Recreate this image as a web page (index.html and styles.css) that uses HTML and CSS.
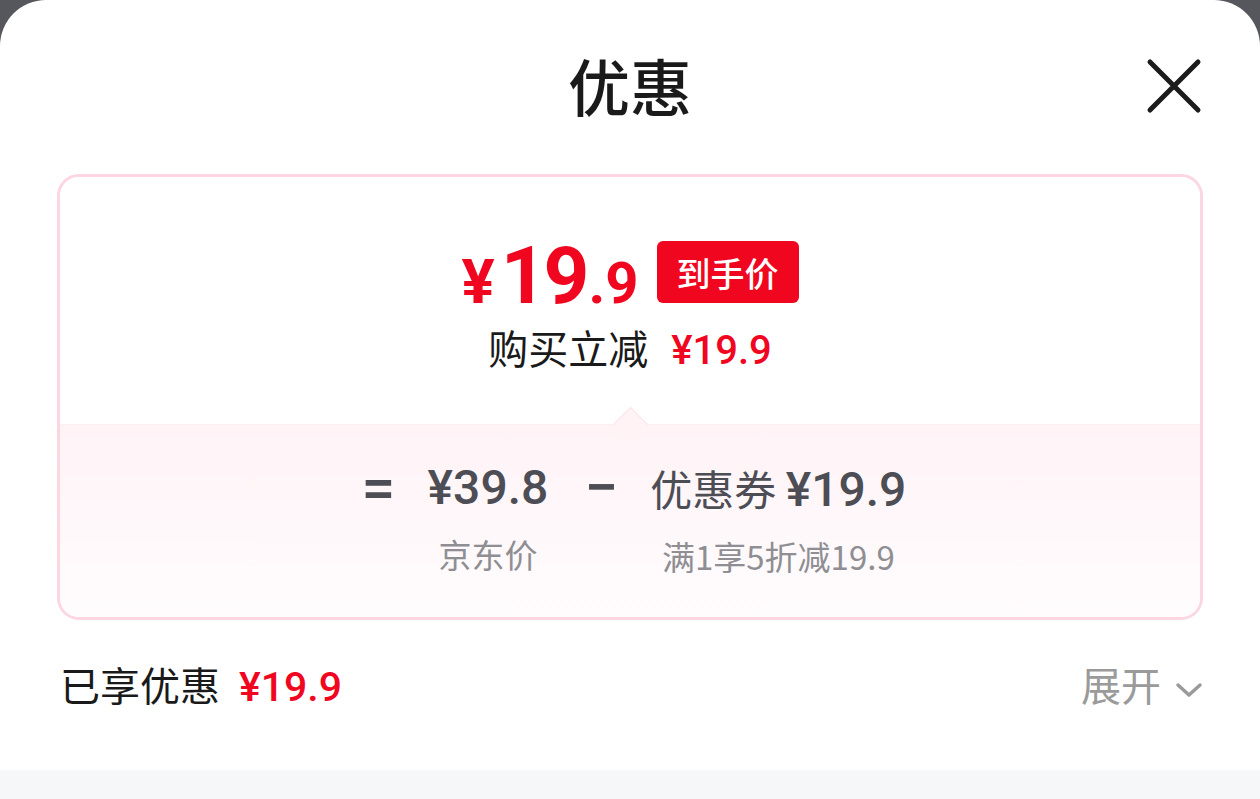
FILE: index.html
```html
<html>
<head>
	<meta charset="utf-8">
	<link rel="stylesheet" href="styles.css">
</head>
<body>
	<div class="sheet">
		<div class="header">
			<div class="title">优惠</div>
			<svg class="close" width="56" height="56" viewBox="0 0 56 56">
				<path d="M4 4 L52 52 M52 4 L4 52" stroke="#1c1c1c" stroke-width="5" stroke-linecap="round"/>
			</svg>
		</div>
		<div class="card">
			<div class="card_top">
				<div class="final_line">
					<span class="final_price"><span class="yen">¥</span><span class="int">19</span><span class="dec">.9</span></span>
					<span class="tag">到手价</span>
				</div>
				<div class="cut_line">购买立减 <span class="red_num">¥19.9</span></div>
			</div>
			<div class="card_bottom">
				<div class="notch"></div>
				<div class="formula">
					<div class="op">=</div>
					<div class="term">
						<div class="term_value num">¥39.8</div>
						<div class="term_label">京东价</div>
					</div>
					<div class="op">−</div>
					<div class="term">
						<div class="term_value">优惠券 <span class="num">¥19.9</span></div>
						<div class="term_label">满1享5折减19.9</div>
					</div>
				</div>
			</div>
		</div>
		<div class="summary">
			<div class="enjoyed">已享优惠 <span class="red_num">¥19.9</span></div>
			<div class="expand">展开
				<svg width="28" height="18" viewBox="0 0 28 18">
					<path d="M3 4 L14 14 L25 4" fill="none" stroke="#9a9a9a" stroke-width="3.5" stroke-linecap="round" stroke-linejoin="round"/>
				</svg>
			</div>
		</div>
		<div class="strip"></div>
	</div>
</body>
</html>
```

FILE: styles.css
```css
body
{
	margin: 0;
	background-color: #55575d;
	font-family: "Noto Sans CJK SC", "Noto Sans", sans-serif;
}
.sheet
{
	background-color: white;
	border-radius: 46px 46px 0 0;
	height: 799px;
	display: flex;
	flex-direction: column;
	overflow: hidden;
}
.header
{
	height: 174px;
	display: flex;
	justify-content: center;
	align-items: center;
	position: relative;
}
.title
{
	font-size: 62px;
	font-weight: 500;
	color: #1a1a1a;
	margin-bottom: 4px;
}
.close
{
	position: absolute;
	right: 58px;
	top: 58px;
}
.card
{
	margin: 0 57px;
	border: 3px solid #fcd6e0;
	border-radius: 22px;
	overflow: hidden;
	height: 440px;
	display: flex;
	flex-direction: column;
}
.card_top
{
	height: 247px;
	display: flex;
	flex-direction: column;
	align-items: center;
	background-color: white;
}
.final_line
{
	display: flex;
	align-items: flex-end;
	margin-top: 52px;
	height: 84px;
}
.final_price
{
	font-family: Roboto, "Noto Sans", sans-serif;
	font-weight: bold;
	color: #f1061f;
	line-height: 1;
	display: flex;
	align-items: baseline;
	margin-right: 18px;
	margin-bottom: -3px;
}
.yen
{
	font-size: 62px;
	margin-right: 6px;
}
.int
{
	font-size: 80px;
	letter-spacing: -3px;
}
.dec
{
	font-size: 58px;
	margin-left: 2px;
}
.tag
{
	background-color: #f1061f;
	color: white;
	font-size: 34px;
	font-weight: 500;
	border-radius: 6px;
	height: 62px;
	width: 142px;
	display: flex;
	align-items: center;
	justify-content: center;
	margin-bottom: 10px;
}
.cut_line
{
	font-size: 40px;
	color: #1a1a1a;
	margin-top: 5px;
}
.red_num
{
	font-family: Roboto, "Noto Sans", sans-serif;
	font-weight: 500;
	color: #f1061f;
	margin-left: 6px;
}
.cut_line .red_num
{
	margin-left: 14px;
}
.card_bottom
{
	flex: 1;
	position: relative;
	background: linear-gradient(#fff3f6, #fffcfd);
	border-top: 1px solid #fdeef2;
}
.notch
{
	position: absolute;
	left: 558px;
	top: -13px;
	width: 24px;
	height: 24px;
	background-color: #fff3f6;
	border-left: 1px solid #fde4ea;
	border-top: 1px solid #fde4ea;
	transform: rotate(45deg);
}
.formula
{
	display: flex;
	justify-content: center;
	align-items: flex-start;
	gap: 36px;
	padding-top: 33px;
	margin-left: 8px;
}
.op
{
	font-family: Roboto, "Noto Sans", sans-serif;
	font-size: 60px;
	font-weight: 500;
	color: #4d4d55;
	line-height: 60px;
	width: 30px;
	text-align: center;
}
.term
{
	display: flex;
	flex-direction: column;
	align-items: center;
}
.term_value
{
	font-size: 42px;
	color: #4d4d55;
	line-height: 60px;
}
.num
{
	font-family: Roboto, "Noto Sans", sans-serif;
	font-size: 48px;
	font-weight: 500;
}
.term_label
{
	font-size: 33px;
	color: #8e8e93;
	margin-top: 12px;
}
.summary
{
	display: flex;
	justify-content: space-between;
	align-items: center;
	margin: 0 57px 0 60px;
	height: 128px;
	padding-bottom: 22px;
}
.enjoyed
{
	font-size: 40px;
	color: #1a1a1a;
}
.enjoyed .red_num
{
	font-size: 41px;
	margin-left: 10px;
}
.expand
{
	font-size: 40px;
	color: #9a9a9a;
	display: flex;
	align-items: center;
	gap: 14px;
}
.expand svg
{
	margin-top: 12px;
}
.strip
{
	flex: 1;
	background-color: #f6f7f9;
}
```
